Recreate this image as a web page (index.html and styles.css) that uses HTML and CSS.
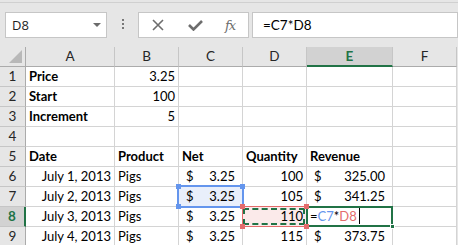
FILE: index.html
```html
<!DOCTYPE html>
<html>
<head>
<meta charset="utf-8">
<link rel="stylesheet" href="styles.css">
</head>
<body>
<div class="app">
  <div class="fbar">
    <div class="namebox"><span>D8</span><svg class="dd" width="8" height="5" viewBox="0 0 8 5"><polygon points="0,0 8,0 4,4" fill="#6b6b6b"/></svg></div>
    <div class="dots"><i></i><i></i><i></i></div>
    <div class="fxbox">
      <svg class="ico-x" width="12" height="12" viewBox="0 0 12 12"><path d="M1 1 L11 11 M11 1 L1 11" stroke="#6d6d6d" stroke-width="1.6" fill="none"/></svg>
      <svg class="ico-ok" width="15" height="11" viewBox="0 0 15 11"><path d="M1 5 L5.5 9.5 L14 1" stroke="#6d6d6d" stroke-width="2.6" fill="none"/></svg>
      <span class="fx">fx</span>
    </div>
    <div class="formula">=C7*D8</div>
  </div>
  <div class="sheet">
    <div class="corner"><svg width="13" height="13" viewBox="0 0 13 13"><polygon points="13,0 13,13 0,13" fill="#b8b8b8"/></svg></div>
    <div class="ch">A</div><div class="ch">B</div><div class="ch">C</div><div class="ch">D</div><div class="ch sel">E</div><div class="ch">F</div>

    <div class="rh">1</div><div class="c b">Price</div><div class="c r">3.25</div><div class="c"></div><div class="c"></div><div class="c"></div><div class="c"></div>
    <div class="rh">2</div><div class="c b">Start</div><div class="c r">100</div><div class="c"></div><div class="c"></div><div class="c"></div><div class="c"></div>
    <div class="rh">3</div><div class="c b">Increment</div><div class="c r">5</div><div class="c"></div><div class="c"></div><div class="c"></div><div class="c"></div>
    <div class="rh">4</div><div class="c"></div><div class="c"></div><div class="c"></div><div class="c"></div><div class="c"></div><div class="c"></div>
    <div class="rh">5</div><div class="c b">Date</div><div class="c b">Product</div><div class="c b">Net</div><div class="c b">Quantity</div><div class="c b">Revenue</div><div class="c"></div>

    <div class="rh">6</div><div class="c r">July 1, 2013</div><div class="c">Pigs</div><div class="c acc"><span>$</span><span>3.25</span></div><div class="c r">100</div><div class="c acc"><span>$</span><span>325.00</span></div><div class="c"></div>
    <div class="rh">7</div><div class="c r">July 2, 2013</div><div class="c">Pigs</div><div class="c acc ref-blue"><span>$</span><span>3.25</span><i class="h tl"></i><i class="h tr"></i><i class="h bl"></i><i class="h br"></i></div><div class="c r">105</div><div class="c acc"><span>$</span><span>341.25</span></div><div class="c"></div>
    <div class="rh sel">8</div><div class="c r">July 3, 2013</div><div class="c">Pigs</div><div class="c acc"><span>$</span><span>3.25</span></div><div class="c r ref-red">110<i class="h tl"></i><i class="h tr"></i><i class="h bl"></i><i class="h br"></i></div><div class="c active"><span>=</span><span class="cb">C7</span><span>*</span><span class="cr">D8</span><span class="caret"></span><i class="fill"></i></div><div class="c"></div>
    <div class="rh">9</div><div class="c r">July 4, 2013</div><div class="c">Pigs</div><div class="c acc"><span>$</span><span>3.25</span></div><div class="c r">115</div><div class="c acc"><span>$</span><span>373.75</span></div><div class="c"></div>
  </div>
</div>
</body>
</html>
```
FILE: styles.css
```css
* { box-sizing: border-box; margin: 0; padding: 0; }
html, body { margin: 0; width: 458px; height: 245px; overflow: hidden; background: #e6e6e6; }
body { font-family: Lato, "Liberation Sans", sans-serif; color: #000; }

.fbar {
  height: 45px;
  display: flex;
  align-items: flex-start;
  padding: 9px 0 0 5px;
  border-top: 1px solid #d0d0d0;
  margin-top: 2px;
}
.namebox {
  width: 102px; height: 26px;
  background: #fff; border: 1px solid #c6c6c6;
  display: flex; align-items: center; justify-content: space-between;
  padding: 0 5px 0 6px;
  font-family: "Open Sans", sans-serif; font-size: 13px; color: #1e1e1e;
}
.dd { margin-top: 1px; }
.dots {
  width: 31px; display: flex; flex-direction: column; align-items: center;
  gap: 2px; padding-top: 7px;
}
.dots i { width: 2px; height: 2px; background: #777; }
.fxbox {
  width: 111px; height: 26px;
  background: #fff; border: 1px solid #c6c6c6;
  display: flex; align-items: center;
  padding-left: 13px;
}
.ico-x { margin-right: 24px; }
.ico-ok { margin-right: 22px; }
.fx {
  font-family: "DejaVu Serif", "Liberation Serif", serif; font-style: italic;
  font-size: 13px; color: #6d6d6d; letter-spacing: -1px;
}
.formula {
  width: 206px; height: 26px; margin-left: 3px;
  background: #fff; border: 1px solid #c6c6c6;
  padding-left: 10px; font-size: 13.5px; line-height: 24px;
}

.sheet {
  display: grid;
  grid-template-columns: 26px 89px 64px 64px 64px 86px 64px;
  grid-auto-rows: 20px;
  width: 457px;
  background: #fff;
  font-size: 13px;
}
.corner {
  background: #e6e6e6;
  border-right: 1px solid #ababab; border-bottom: 1px solid #ababab;
  display: flex; align-items: flex-end; justify-content: flex-end;
  padding: 0 3px 3px 0;
}
.ch {
  background: #e6e6e6;
  border-right: 1px solid #c6c6c6; border-bottom: 1px solid #ababab;
  text-align: center; line-height: 19px; color: #262626; font-size: 13.5px;
}
.ch.sel { background: #d2d2d2; color: #217346; font-weight: 700; border-bottom: 2px solid #217346; }
.rh {
  background: #e6e6e6;
  border-right: 1px solid #ababab; border-bottom: 1px solid #c6c6c6;
  text-align: center; line-height: 19px; color: #262626; font-size: 13.5px;
}
.rh.sel { background: #d2d2d2; color: #217346; font-weight: 700; border-right: 2px solid #217346; }

.c {
  position: relative;
  border-right: 1px solid #d4d4d4; border-bottom: 1px solid #d4d4d4;
  line-height: 19px; padding: 0 3px; white-space: nowrap;
}
.c.b { font-weight: 700; }
.c.r { text-align: right; }
.c.acc { display: flex; justify-content: space-between; padding: 0 7px 0 7px; }

.ref-blue { background: #e9effb; }
.ref-blue::after {
  content: ""; position: absolute; left: -2px; top: -2px; right: -2px; bottom: -2px;
  border: 2px solid #6495ed;
}
.ref-blue .h { background: #6495ed; }
.h { position: absolute; width: 5px; height: 5px; z-index: 3; }
.h.tl { left: -3px; top: -3px; }
.h.tr { right: -3px; top: -3px; }
.h.bl { left: -3px; bottom: -3px; }
.h.br { right: -3px; bottom: -3px; }

.ref-red { background: #fbeaea; }
.ref-red::before {
  content: ""; position: absolute; left: -1px; top: -1px; right: -1px; bottom: -1px;
  border: 1px solid #e46c6c;
}
.ref-red::after {
  content: ""; position: absolute; left: 0; top: 1px; right: 1px; bottom: 1px;
  border: 2px dashed #217346;
}
.ref-red .h { background: #e46c6c; }

.active { z-index: 2; }
.active::after {
  content: ""; position: absolute; left: -1px; top: -1px; right: -1px; bottom: -1px;
  border: 2px solid #217346;
}
.cb { color: #6495ed; }
.cr { color: #e46c6c; }
.caret { display: inline-block; width: 1px; height: 16px; background: #000; margin-left: 2px; vertical-align: -3px; }
.fill { position: absolute; right: -3px; bottom: -3px; width: 5px; height: 5px; background: #217346; border: 1px solid #fff; z-index: 3; }
```
